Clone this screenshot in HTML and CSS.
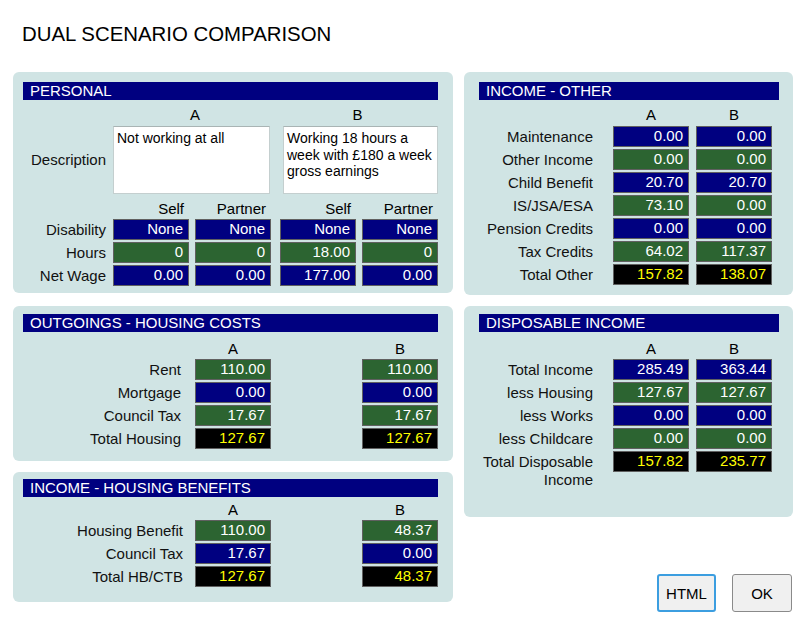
FILE: index.html
```html
<!DOCTYPE html>
<html>
<head>
<meta charset="utf-8">
<title>Dual Scenario Comparison</title>
<link rel="stylesheet" href="styles.css">
</head>
<body>
<h1 class="title">DUAL SCENARIO COMPARISON</h1>
<div class="main">
  <div class="col col-left">
    <section class="panel panel-personal">
      <div class="panel-head">PERSONAL</div>
      <div class="grid grid-personal">
        <div class="colhead span-a">A</div>
        <div class="colhead span-b">B</div>

        <div class="label label-mid">Description</div>
        <div class="desc span-a-box">Not working at all</div>
        <div class="desc span-b-box">Working 18 hours a<br>week with £180 a week<br>gross earnings</div>

        <div class="label"></div>
        <div class="subhead">Self</div>
        <div class="subhead">Partner</div>
        <div class="subhead">Self</div>
        <div class="subhead">Partner</div>

        <div class="label">Disability</div>
        <div class="cell blue">None</div>
        <div class="cell blue">None</div>
        <div class="cell blue end">None</div>
        <div class="cell blue">None</div>

        <div class="label">Hours</div>
        <div class="cell green">0</div>
        <div class="cell green">0</div>
        <div class="cell green end">18.00</div>
        <div class="cell green">0</div>

        <div class="label">Net Wage</div>
        <div class="cell blue">0.00</div>
        <div class="cell blue">0.00</div>
        <div class="cell blue end">177.00</div>
        <div class="cell blue">0.00</div>
      </div>
    </section>

    <section class="panel panel-outgoings">
      <div class="panel-head">OUTGOINGS - HOUSING COSTS</div>
      <div class="grid grid-housing">
        <div class="label"></div>
        <div class="colhead">A</div>
        <div></div>
        <div class="colhead">B</div>

        <div class="label">Rent</div>
        <div class="cell green">110.00</div>
        <div></div>
        <div class="cell green">110.00</div>

        <div class="label">Mortgage</div>
        <div class="cell blue">0.00</div>
        <div></div>
        <div class="cell blue">0.00</div>

        <div class="label">Council Tax</div>
        <div class="cell green">17.67</div>
        <div></div>
        <div class="cell green">17.67</div>

        <div class="label">Total Housing</div>
        <div class="cell total">127.67</div>
        <div></div>
        <div class="cell total">127.67</div>
      </div>
    </section>

    <section class="panel panel-hb">
      <div class="panel-head">INCOME - HOUSING BENEFITS</div>
      <div class="grid grid-hb">
        <div class="label"></div>
        <div class="colhead">A</div>
        <div></div>
        <div class="colhead">B</div>

        <div class="label">Housing Benefit</div>
        <div class="cell green">110.00</div>
        <div></div>
        <div class="cell green">48.37</div>

        <div class="label">Council Tax</div>
        <div class="cell blue">17.67</div>
        <div></div>
        <div class="cell blue">0.00</div>

        <div class="label">Total HB/CTB</div>
        <div class="cell total">127.67</div>
        <div></div>
        <div class="cell total">48.37</div>
      </div>
    </section>
  </div>

  <div class="col col-right">
    <section class="panel panel-other">
      <div class="panel-head">INCOME - OTHER</div>
      <div class="grid grid-right">
        <div class="label"></div>
        <div class="colhead">A</div>
        <div class="colhead">B</div>

        <div class="label">Maintenance</div>
        <div class="cell blue">0.00</div>
        <div class="cell blue">0.00</div>

        <div class="label">Other Income</div>
        <div class="cell green">0.00</div>
        <div class="cell green">0.00</div>

        <div class="label">Child Benefit</div>
        <div class="cell blue">20.70</div>
        <div class="cell blue">20.70</div>

        <div class="label">IS/JSA/ESA</div>
        <div class="cell green">73.10</div>
        <div class="cell green">0.00</div>

        <div class="label">Pension Credits</div>
        <div class="cell blue">0.00</div>
        <div class="cell blue">0.00</div>

        <div class="label">Tax Credits</div>
        <div class="cell green">64.02</div>
        <div class="cell green">117.37</div>

        <div class="label">Total Other</div>
        <div class="cell total">157.82</div>
        <div class="cell total">138.07</div>
      </div>
    </section>

    <section class="panel panel-disposable">
      <div class="panel-head">DISPOSABLE INCOME</div>
      <div class="grid grid-right grid-disp">
        <div class="label"></div>
        <div class="colhead">A</div>
        <div class="colhead">B</div>

        <div class="label">Total Income</div>
        <div class="cell blue">285.49</div>
        <div class="cell blue">363.44</div>

        <div class="label">less Housing</div>
        <div class="cell green">127.67</div>
        <div class="cell green">127.67</div>

        <div class="label">less Works</div>
        <div class="cell blue">0.00</div>
        <div class="cell blue">0.00</div>

        <div class="label">less Childcare</div>
        <div class="cell green">0.00</div>
        <div class="cell green">0.00</div>

        <div class="label">Total Disposable Income</div>
        <div class="cell total">157.82</div>
        <div class="cell total">235.77</div>
      </div>
    </section>

    <div class="buttons">
      <button class="btn btn-focus">HTML</button>
      <button class="btn">OK</button>
    </div>
  </div>
</div>
</body>
</html>
```

FILE: styles.css
```css
html, body {
  margin: 0;
  padding: 0;
  background: #ffffff;
}

body {
  font-family: "Liberation Sans", Arial, sans-serif;
  font-size: 15px;
  color: #111111;
  width: 808px;
  height: 618px;
  overflow: hidden;
}

.title {
  margin: 23px 0 0 22px;
  font-size: 20.4px;
  font-weight: normal;
  line-height: 22px;
  color: #000000;
}

.main {
  display: flex;
  gap: 11px;
  margin: 27px 0 0 13px;
  align-items: flex-start;
}

.col {
  display: flex;
  flex-direction: column;
  gap: 11px;
}

.col-left {
  width: 440px;
}

.col-right {
  width: 329px;
}

.panel {
  background: #d0e4e4;
  border-radius: 6px;
}

.panel-head {
  height: 18px;
  line-height: 18px;
  background: #000080;
  color: #ffffff;
  font-size: 15px;
  padding-left: 7px;
  white-space: nowrap;
}

.col-left .panel-head {
  margin: 0 15px 0 10px;
}

.col-right .panel-head {
  margin: 0 14px 0 15px;
}

.panel-personal {
  padding: 10px 0 7px;
  margin-bottom: 2px;
}

.panel-outgoings {
  padding: 8px 0 12px;
}

.panel-hb {
  padding: 7px 0 15px;
}

.panel-other {
  padding: 10px 0 10px;
}

.panel-disposable {
  padding: 8px 0 28px;
}

.grid {
  display: grid;
  row-gap: 2px;
}

.col-left .grid {
  margin-left: 10px;
  margin-right: 15px;
}

.col-right .grid {
  margin-left: 15px;
  margin-right: 14px;
}

.grid-personal {
  margin-top: 6px;
  grid-template-columns: 84px 76px 76px 79px 76px;
  grid-template-rows: 18px 68px 21px 21px 21px 21px;
  column-gap: 6px;
}

.grid-housing {
  margin-top: 8px;
  grid-template-columns: 158px 76px 1fr 76px;
  grid-template-rows: 17px repeat(4, 21px);
  column-gap: 14px;
}

.grid-hb {
  margin-top: 4px;
  grid-template-columns: 160px 76px 1fr 76px;
  grid-template-rows: 17px repeat(3, 21px);
  column-gap: 12px;
}

.grid-right {
  grid-template-columns: 127px 76px 76px;
  column-gap: 7px;
}

.panel-other .grid-right {
  margin-top: 6px;
  grid-template-rows: 18px repeat(7, 21px);
}

.panel-disposable .grid-disp {
  margin-top: 8px;
  grid-template-rows: 17px repeat(4, 21px) auto;
}

.grid-right .label {
  padding-right: 13px;
}

.colhead {
  text-align: center;
  line-height: 17px;
  color: #000000;
}

.grid-personal .colhead {
  line-height: 18px;
}

.span-a {
  grid-column: 2 / 4;
  padding-left: 6px;
}

.span-b {
  grid-column: 4 / 6;
}

.span-a-box {
  grid-column: 2 / 4;
  margin-right: 1px;
}

.span-b-box {
  grid-column: 4 / 6;
  margin-left: 6px;
}

.label {
  text-align: right;
  padding-top: 2px;
  line-height: 18px;
  white-space: normal;
}

.grid-personal .label {
  padding-right: 1px;
}

.label-mid {
  align-self: center;
  padding-top: 0;
}

.desc {
  background: #ffffff;
  border: 1px solid #c4cfcf;
  border-top-color: #a9b4b4;
  font-size: 14px;
  line-height: 16.7px;
  padding: 3px 2px 3px 3px;
  color: #000000;
  overflow: hidden;
  white-space: nowrap;
}

.subhead {
  align-self: end;
  text-align: right;
  line-height: 17px;
  padding-right: 5px;
  color: #000000;
}

.cell {
  box-sizing: border-box;
  height: 21px;
  border: 1px solid #606060;
  line-height: 18px;
  text-align: right;
  padding-right: 5px;
  color: #ffffff;
  white-space: nowrap;
}

.cell.end {
  margin-left: 3px;
}

.blue {
  background: #000080;
}

.green {
  background: #2c6431;
}

.total {
  background: #000000;
  color: #ffff00;
}

.buttons {
  display: flex;
  justify-content: flex-end;
  gap: 16px;
  margin-top: 46px;
  margin-right: 1px;
}

.btn {
  box-sizing: border-box;
  width: 60px;
  height: 38px;
  font-family: "Liberation Sans", Arial, sans-serif;
  font-size: 15px;
  color: #000000;
  background: #f0f0f0;
  border: 1px solid #8a8a8a;
  border-radius: 3px;
  padding: 0;
}

.btn-focus {
  width: 59px;
  border: 2px solid #3c9ee0;
}
```
